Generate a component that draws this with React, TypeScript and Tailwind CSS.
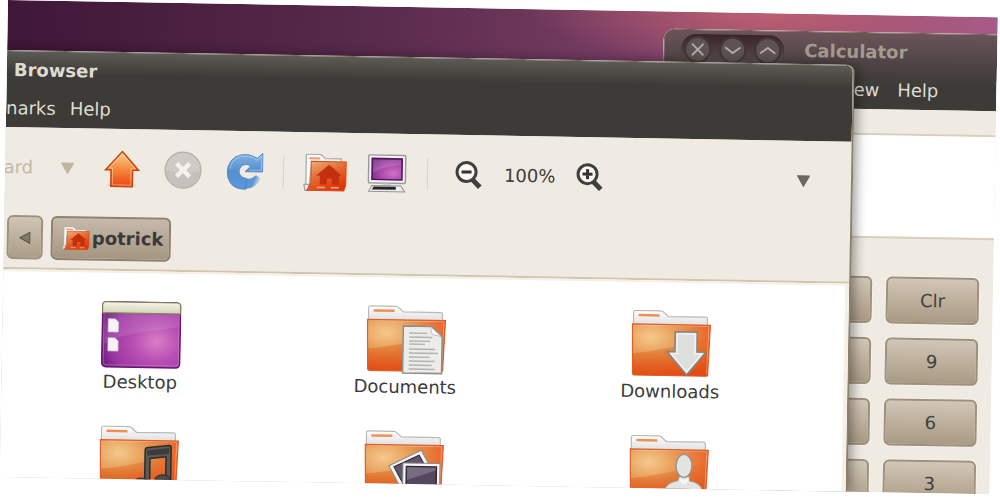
import { useId, type ReactNode } from "react";

interface FolderItem {
  name: string;
  label?: string;
  icon: ReactNode;
}

function FolderIcon({ children }: { children?: ReactNode }) {
  const id = useId();

  return (
    <svg viewBox="0 0 80 70" className="h-[70px] w-20" aria-hidden="true">
      <defs>
        <radialGradient id={`${id}front`} cx="0.24" cy="0.25" r="0.9">
          <stop offset="0" stopColor="#f4c98c" />
          <stop offset="0.45" stopColor="#e5954f" />
          <stop offset="1" stopColor="#ee5420" />
        </radialGradient>
        <linearGradient id={`${id}shade`} x1="0" y1="0" x2="0" y2="1">
          <stop offset="0" stopColor="#de6a1c" stopOpacity="0.15" />
          <stop offset="1" stopColor="#e0480f" stopOpacity="0.8" />
        </linearGradient>
        <linearGradient id={`${id}tab`} x1="0" y1="0" x2="0" y2="1">
          <stop offset="0" stopColor="#ffffff" />
          <stop offset="1" stopColor="#dcdcdc" />
        </linearGradient>
      </defs>
      <path
        d="M2 17V3.5Q2 1.5 4 1.5H29Q31 1.5 32.500 3L37 7H74Q76 7 76 9V17Z"
        fill={`url(#${id}tab)`}
        stroke="#b9b9b9"
        strokeWidth="1.200"
      />
      <path d="M7 6H28" stroke="#ee9057" strokeWidth="2.500" />
      <path d="M1 15H79L77 65Q77 66 75 66H4Q2 66 2 64Z" fill={`url(#${id}front)`} />
      <path d="M2 44C24 42 50 36 78 27L77 65Q77 66 75 66H4Q2 66 2 64Z" fill={`url(#${id}shade)`} />
      <path d="M2.500 16H77.500L76 64" fill="none" stroke="#fbd3aa" strokeOpacity="0.5" />
      <path d="M1 15H79L77 65Q77 66 75 66H4Q2 66 2 64Z" fill="none" stroke="#dc5e2c" strokeWidth="1.200" />
      {children}
    </svg>
  );
}

function DesktopIcon() {
  return (
    <svg viewBox="0 0 80 70" className="h-[70px] w-20" aria-hidden="true">
      <defs>
        <radialGradient id="wallpaper" cx="0.7" cy="0.6" r="0.75">
          <stop offset="0" stopColor="#d77fc4" />
          <stop offset="0.4" stopColor="#b84fb4" />
          <stop offset="0.8" stopColor="#9a37a0" />
          <stop offset="1" stopColor="#6f1d80" />
        </radialGradient>
        <linearGradient id="panel" x1="0" y1="0" x2="0" y2="1">
          <stop offset="0" stopColor="#f6f6ea" />
          <stop offset="1" stopColor="#d3d2b4" />
        </linearGradient>
      </defs>
      <rect x="1" y="2" width="78" height="65" rx="4" fill="url(#wallpaper)" stroke="#6a1670" strokeWidth="1.500" />
      <path d="M3 14H77V26C55 31 25 31 3 44Z" fill="#ffffff" fillOpacity="0.1" />
      <rect x="2.500" y="4" width="75" height="61" rx="3" fill="none" stroke="#d989d3" strokeOpacity="0.5" />
      <path d="M1 13V5Q1 2 4 2H76Q79 2 79 5V13Z" fill="url(#panel)" stroke="#83835b" strokeWidth="1.200" />
      <path d="M7 19H14L17 22V32H7ZM7 38H14L17 41V51H7Z" fill="#f4f4f4" stroke="#ddd1df" strokeWidth="0.800" />
    </svg>
  );
}

function DocumentEmblem() {
  return (
    <>
      <path d="M37 21H65L76 31V68H37Z" fill="#ececea" stroke="#8d8d89" strokeWidth="1.500" />
      <path d="M64 21L66 29L75 31Z" fill="#ffffff" stroke="#b4b4b0" strokeWidth="0.800" />
      <path
        d="M43 28H61M43 32H66M43 36H64M43 39H59M43 44H69M43 48H72M43 52H64M43 56H69M43 60H66M43 64H69"
        stroke="#b2b2ae"
        strokeWidth="1.400"
      />
    </>
  );
}

function DownloadEmblem() {
  return (
    <>
      <path d="M44 22H66V42H75L56 65L36 42H44Z" fill="#dededc" stroke="#858581" strokeWidth="1.600" />
      <path d="M46 24H64V44H71L56 62L40 44H46Z" fill="none" stroke="#f6f6f6" strokeWidth="1.200" />
    </>
  );
}

function MusicEmblem() {
  return (
    <>
      <path
        d="M46 55V25Q46 22 49 22L70 19.500Q72 19.500 72 22V55H67V31L51 33V55Z"
        fill="#5a5a58"
        stroke="#2c2c2a"
        strokeWidth="1.500"
      />
      <path d="M48 30V25L70 22V28Z" fill="#3c3c3a" />
      <ellipse cx="43" cy="57" rx="8" ry="5" fill="#3b3b39" />
      <ellipse cx="64" cy="55" rx="8" ry="6" fill="#4b4b49" stroke="#2c2c2a" />
    </>
  );
}

function PictureEmblem() {
  return (
    <>
      <path d="M25 36L57 20L73 48L41 65Z" fill="#f4f4f4" stroke="#8b8b89" />
      <path d="M30 37L55 25L68 47L43 60Z" fill="#62566b" stroke="#302a36" />
      <rect x="39" y="33" width="37" height="34" fill="#f6f6f6" stroke="#8b8b89" />
      <rect x="42.500" y="36.500" width="30" height="27" fill="#54475f" stroke="#2e2834" strokeWidth="1.500" />
      <path d="M43 50L72 40V37H43Z" fill="#ffffff" fillOpacity="0.2" />
    </>
  );
}

function PersonEmblem() {
  return (
    <>
      <path d="M36 57Q37 48 49 46L51 41H60L61 46Q73 48 74 57V66H36Z" fill="#e4e4e2" stroke="#a2a29e" />
      <ellipse cx="55" cy="31" rx="8" ry="11.500" fill="#e3e3e1" stroke="#93938f" strokeWidth="1.400" />
      <path d="M50 43Q55 47 60 43L58 49H53Z" fill="#f4f4f2" />
    </>
  );
}

function HomeFolderIcon({ className }: { className: string }) {
  const id = useId();

  return (
    <svg viewBox="0 0 44 38" className={className} aria-hidden="true">
      <defs>
        <linearGradient id={id} x1="0" y1="0" x2="0.6" y2="1">
          <stop offset="0" stopColor="#efb37c" />
          <stop offset="0.5" stopColor="#e66c35" />
          <stop offset="1" stopColor="#df3708" />
        </linearGradient>
      </defs>
      <path d="M3 36V2Q3 1 4 1H18L22 5H38V14H8L6 36Z" fill="#fafafa" stroke="#a6a6aa" strokeWidth="1.200" />
      <path d="M6 5H17" stroke="#ed9a67" strokeWidth="2" />
      <path d="M1 31H6V37H2Z" fill="#e8e8e8" stroke="#92929a" />
      <path d="M8 8H43V31L41 37H4L8 30Z" fill={`url(#${id})`} stroke="#d84a1a" />
      <path d="M26 11L39 22H36V31H29V25H24V31H17V22H13Z" fill="#c3300e" />
      <path d="M14 34H22M28 34H36" stroke="#f2a67f" strokeWidth="1.500" />
    </svg>
  );
}

function UpIcon() {
  return (
    <svg viewBox="0 0 36 38" className="h-[38px] w-9" aria-hidden="true">
      <defs>
        <linearGradient id="up" x1="0" y1="0" x2="0" y2="1">
          <stop offset="0" stopColor="#fbd091" />
          <stop offset="0.5" stopColor="#f58a3e" />
          <stop offset="1" stopColor="#ee4514" />
        </linearGradient>
      </defs>
      <ellipse cx="18" cy="35" rx="15" ry="2.500" fill="#e2dacf" />
      <path d="M18 1.500L34.500 20H28.500V36.500H7V20H1.500Z" fill="url(#up)" stroke="#c84413" strokeWidth="1.500" />
      <path d="M18 4L31 18.500H27V35H8.500V18.500H5Z" fill="none" stroke="#ffd7a4" strokeOpacity="0.6" />
    </svg>
  );
}

function StopIcon() {
  return (
    <svg viewBox="0 0 38 38" className="size-[38px]" aria-hidden="true">
      <circle cx="19" cy="19" r="18" fill="#c7c1bd" stroke="#b7b0ab" strokeWidth="1.200" />
      <path d="M2 19A17 17 0 0 1 36 19Q19 25 2 19Z" fill="#ffffff" fillOpacity="0.15" />
      <path d="M12.500 12.500L25.500 25.500M25.500 12.500L12.500 25.500" stroke="#f5f2ee" strokeWidth="4.500" />
    </svg>
  );
}

function RefreshIcon() {
  return (
    <svg viewBox="0 0 38 38" className="size-[38px]" aria-hidden="true">
      <defs>
        <linearGradient id="ring" x1="0" y1="0" x2="0" y2="1">
          <stop offset="0" stopColor="#86b2e0" />
          <stop offset="0.5" stopColor="#5690d0" />
          <stop offset="1" stopColor="#5b96d6" />
        </linearGradient>
        <linearGradient id="tail" x1="0" y1="0" x2="1" y2="0.3">
          <stop offset="0.65" stopColor="#5b96d6" />
          <stop offset="1" stopColor="#5b96d6" stopOpacity="0.1" />
        </linearGradient>
      </defs>
      <path d="M19 26Q25 28 30 23L35 26Q30 37 17 37Z" fill="url(#tail)" />
      <path
        d="M31 6L36.500 1V19.500H19L24.500 14Q20 10.500 15.500 14Q11.500 18 14 22.500Q16 26 21 26.500L20 37Q6 38 2 26Q-1 12 9 5Q20 -1 31 6Z"
        fill="url(#ring)"
        stroke="#4581c6"
        strokeWidth="0.800"
      />
      <path d="M4 17Q5 8 14 4.500Q23 2 31 8L35.500 4V18H23" fill="none" stroke="#b1d0ef" strokeOpacity="0.7" />
    </svg>
  );
}

function ComputerIcon() {
  return (
    <svg viewBox="0 0 40 40" className="size-10" aria-hidden="true">
      <defs>
        <radialGradient id="screen" cx="0.7" cy="0.7" r="0.8">
          <stop offset="0" stopColor="#cf70c9" />
          <stop offset="0.6" stopColor="#a445a6" />
          <stop offset="1" stopColor="#7a2787" />
        </radialGradient>
      </defs>
      <rect x="1.500" y="1.500" width="37" height="28" rx="1" fill="#f2f2f2" stroke="#9a9a9a" strokeWidth="1.400" />
      <rect x="5" y="5" width="30" height="21" fill="url(#screen)" stroke="#51135a" strokeWidth="1.500" />
      <path d="M6 6H34V11Q19 12 6 19Z" fill="#ffffff" fillOpacity="0.15" />
      <path d="M16 30H24V33H16Z" fill="#d0d0d0" />
      <path d="M5 32H34L38 38H2Z" fill="#ededed" stroke="#929292" />
      <path d="M7 33H29V36H5Z" fill="#252525" />
    </svg>
  );
}

function ZoomIcon({ plus = false }: { plus?: boolean }) {
  return (
    <svg viewBox="0 0 28 30" className="h-[30px] w-7" aria-hidden="true">
      <path d="M17 19L25 27" stroke="#403f3d" strokeWidth="5" />
      <circle cx="11.500" cy="12" r="9.500" fill="#f8f7f4" stroke="#403f3d" strokeWidth="3" />
      <path d={plus ? "M6.500 12H16.500M11.500 7V17" : "M6.500 12H16.500"} stroke="#333231" strokeWidth="3" />
    </svg>
  );
}

function Triangle({ className }: { className: string }) {
  return (
    <svg viewBox="0 0 13 12" className={`h-3 w-[13px] ${className}`} aria-hidden="true">
      <path d="M0.500 1H12.500L6.500 11.500Z" fill="currentColor" stroke="currentColor" />
    </svg>
  );
}

function Separator() {
  return <div className="h-8 w-px bg-[#dcd4c5]" />;
}

const folders: FolderItem[] = [
  { name: "Desktop", label: "Desktop", icon: <DesktopIcon /> },
  { name: "Documents", label: "Documents", icon: <FolderIcon><DocumentEmblem /></FolderIcon> },
  { name: "Downloads", label: "Downloads", icon: <FolderIcon><DownloadEmblem /></FolderIcon> },
  { name: "Music", icon: <FolderIcon><MusicEmblem /></FolderIcon> },
  { name: "Pictures", icon: <FolderIcon><PictureEmblem /></FolderIcon> },
  { name: "Public", icon: <FolderIcon><PersonEmblem /></FolderIcon> },
];

const windowControls = [
  { name: "Close", path: "M6 6L18 18M18 6L6 18" },
  { name: "Minimize", path: "M4 9L12 15L20 9" },
  { name: "Maximize", path: "M4 15L12 9L20 15" },
];

const keys = ["", "Clr", "", "9", "", "6", "", "3"];

function Calculator() {
  return (
    <section
      aria-label="Calculator"
      className="absolute bottom-0 right-0 top-[17px] flex w-[334px] flex-col overflow-hidden rounded-tl-xl bg-[#efeae2]"
    >
      <header className="border-l border-t border-[#6b5b4f] rounded-tl-xl bg-linear-to-b from-[#6b5459] via-[#484041] via-50% to-[#3c3b37] to-70%">
        <div className="flex h-[38px] items-center gap-5 pl-[17px]">
          <div className="flex h-[30px] items-center gap-2 rounded-full bg-linear-to-b from-[#3a2429] to-[#5a5152] px-[3px]">
            {windowControls.map((control) => (
              <button
                key={control.name}
                type="button"
                aria-label={control.name}
                className="size-[27px] rounded-full border-2 border-[#423738] bg-[#5d5355] text-[#b3a8a8]"
              >
                <svg viewBox="0 0 24 24" className="size-full" aria-hidden="true">
                  <path d={control.path} fill="none" stroke="currentColor" strokeWidth="2" />
                </svg>
              </button>
            ))}
          </div>
          <h2 className="text-lg/6 font-bold text-[#a59990]">Calculator</h2>
        </div>
        <nav className="flex h-[38px] items-center gap-[18px] pl-[173px] text-[#dfdbd2]">
          <button type="button">View</button>
          <button type="button">Help</button>
        </nav>
      </header>
      <div className="h-[26px] shrink-0 border-b-2 border-[#d9cfbb]" />
      <textarea aria-label="Display" className="block h-[101px] w-full shrink-0 resize-none bg-white outline-none" />
      <div className="grid grid-cols-3 gap-3.5 border-t-2 border-[#d9cfbb] px-3.5 pt-[38px]">
        {keys.map((key, index) => (
          <button
            key={index}
            type="button"
            aria-label={key || "Key"}
            className={`h-[47px] rounded-md border-2 border-[#9d907d] bg-linear-to-b from-[#d2c6b7] via-[#b9ab97] via-60% to-[#a99a84] text-[#41413f] shadow-[0_0_0_1px_#f5f1ea] ${
              index % 2 === 0 ? "col-start-2" : ""
            }`}
          >
            {key}
          </button>
        ))}
      </div>
    </section>
  );
}

function FileBrowser() {
  return (
    <section
      aria-label="File browser"
      className="absolute bottom-0 left-0 right-[142px] top-[50px] flex flex-col overflow-hidden rounded-tr-lg border-r-2 border-[#8d8069] bg-[#efeae2] shadow-[3px_0_12px_rgba(0,0,0,0.4)]"
    >
      <header className="rounded-tr-lg border-t border-[#706b57] bg-linear-to-b from-[#5c5b55] to-[#3c3b37] to-30% text-[#dfdbd2]">
        <h1 className="flex h-[38px] items-center pl-[7px] text-lg/6 font-bold">Browser</h1>
        <nav className="flex h-[38px] items-center gap-3.5">
          <button type="button">narks</button>
          <button type="button">Help</button>
        </nav>
      </header>

      <div className="flex h-20 shrink-0 items-center text-[#3e3d3a]">
        <button type="button" className="flex w-7 justify-end text-[#c4b9a6]">ard</button>
        <button type="button" aria-label="History" className="ml-7">
          <Triangle className="text-[#c0b59e]" />
        </button>
        <button type="button" aria-label="Up" className="ml-[30px]"><UpIcon /></button>
        <button type="button" aria-label="Stop" className="ml-6"><StopIcon /></button>
        <button type="button" aria-label="Reload" className="ml-6 mr-[19px]"><RefreshIcon /></button>
        <Separator />
        <button type="button" aria-label="Home" className="ml-[19px]">
          <HomeFolderIcon className="h-[38px] w-11" />
        </button>
        <button type="button" aria-label="Computer" className="mx-5"><ComputerIcon /></button>
        <Separator />
        <button type="button" aria-label="Zoom out" className="ml-[27px]"><ZoomIcon /></button>
        <span className="mx-[21px]">100%</span>
        <button type="button" aria-label="Zoom in"><ZoomIcon plus /></button>
        <button type="button" aria-label="More" className="ml-auto mr-[41px]">
          <Triangle className="text-[#6b6962]" />
        </button>
      </div>

      <nav className="flex shrink-0 gap-2 border-b-2 border-[#d2c5ad] py-2 pl-[3px]">
        <button
          type="button"
          aria-label="Back"
          className="flex h-11 w-9 items-center justify-center rounded-md border-2 border-[#9d907d] bg-linear-to-b from-[#d0c4b5] to-[#ac9d88]"
        >
          <svg viewBox="0 0 12 13" className="h-[13px] w-3" aria-hidden="true">
            <path d="M11 1V12L1 6.500Z" fill="#817968" stroke="#555047" />
          </svg>
        </button>
        <button
          type="button"
          className="flex h-11 w-[120px] items-center gap-0.5 rounded-md border-2 border-[#8d806c] bg-linear-to-b from-[#c7baab] to-[#a59680] pl-[9px] font-bold text-[#3a3a3a]"
        >
          <HomeFolderIcon className="h-6 w-7" />
          potrick
        </button>
      </nav>

      <div className="flex-1 border-r-4 border-t-2 border-[#f5f0e7] bg-white pl-1.5 pt-[27px]">
        <ul className="grid grid-cols-[repeat(3,265px)] gap-y-[31px]">
          {folders.map((folder) => (
            <li key={folder.name} className="flex flex-col items-center text-[#3c3c3c]">
              {folder.icon}
              {folder.label && <span>{folder.label}</span>}
            </li>
          ))}
        </ul>
      </div>
    </section>
  );
}

export default function App() {
  return (
    <main className="min-h-screen overflow-hidden bg-white pl-2 pr-0.5 font-['DejaVu_Sans',sans-serif] text-lg/6">
      <div className="relative h-[477px] origin-top-left rotate-1 overflow-hidden">
        <div className="h-16 bg-linear-to-r from-[#3f1738] via-[#57294a] via-35% to-[#a55b89]">
          <div className="h-full bg-[radial-gradient(ellipse_240px_56px_at_77%_0,#bd5f70,transparent)]" />
        </div>
        <Calculator />
        <FileBrowser />
      </div>
    </main>
  );
}
